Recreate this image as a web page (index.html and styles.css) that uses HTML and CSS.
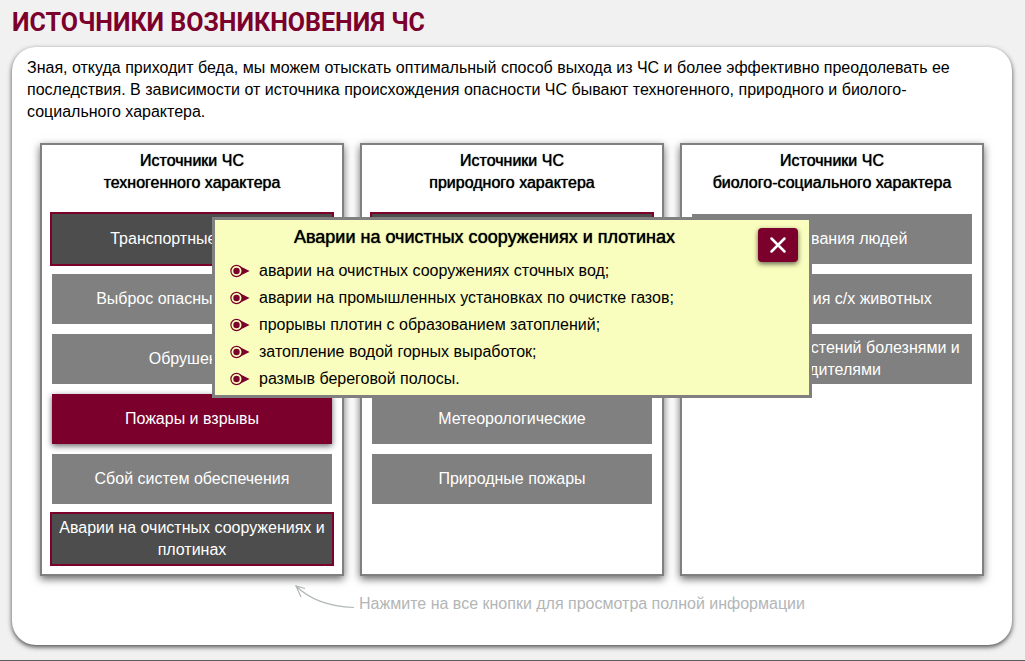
FILE: index.html
```html
<!DOCTYPE html>
<html lang="ru">
<head>
<meta charset="utf-8">
<title>Источники возникновения ЧС</title>
<link rel="stylesheet" href="styles.css">
</head>
<body>
<svg class="sprite" aria-hidden="true">
  <symbol id="marker" viewBox="0 0 20 14">
    <path d="M9 1.800 19.600 7 9 12.200Z" fill="#7b002c"/>
    <circle cx="6.500" cy="7" r="5.600" fill="#f9fdbd" stroke="#7b002c" stroke-width="1.200"/>
    <circle cx="6.500" cy="7" r="3.200" fill="#7b002c"/>
  </symbol>
</svg>
<h1 class="title">ИСТОЧНИКИ ВОЗНИКНОВЕНИЯ ЧС</h1>
<main class="panel">
  <p class="intro">Зная, откуда приходит беда, мы можем отыскать оптимальный способ выхода из ЧС и более эффективно преодолевать ее последствия. В зависимости от источника происхождения опасности ЧС бывают техногенного, природного и биолого-социального характера.</p>
  <div class="columns">
    <section class="column">
      <h2 class="column-title">Источники ЧС<br>техногенного характера</h2>
      <button class="item visited" type="button">Транспортные аварии</button>
      <button class="item" type="button">Выброс опасных веществ</button>
      <button class="item" type="button">Обрушения</button>
      <button class="item active" type="button">Пожары и взрывы</button>
      <button class="item" type="button">Сбой систем обеспечения</button>
      <button class="item visited" type="button">Аварии на очистных сооружениях и плотинах</button>
    </section>
    <section class="column">
      <h2 class="column-title">Источники ЧС<br>природного характера</h2>
      <button class="item visited" type="button">Геологические</button>
      <button class="item" type="button">Гидрологические</button>
      <button class="item" type="button">Геофизические</button>
      <button class="item" type="button">Метеорологические</button>
      <button class="item" type="button">Природные пожары</button>
    </section>
    <section class="column">
      <h2 class="column-title">Источники ЧС<br>биолого-социального характера</h2>
      <button class="item" type="button">Заболевания людей</button>
      <button class="item" type="button">Заболевания с/х животных</button>
      <button class="item" type="button">Поражения растений болезнями и вредителями</button>
    </section>
  </div>
  <div class="hint">
    <svg class="hint-arrow" width="60" height="24" viewBox="0 0 60 24" fill="none" stroke="#b2b6b7" stroke-width="1.200" aria-hidden="true">
      <path d="M1 1C14 14 34 21.500 59 22.500M10 3.500 1 1 6 12"/>
    </svg>
    <span>Нажмите на все кнопки для просмотра полной информации</span>
  </div>
  <div class="popup" role="dialog" aria-labelledby="popup-title">
    <h2 class="popup-title" id="popup-title">Аварии на очистных сооружениях и плотинах</h2>
    <button class="close" type="button" aria-label="Закрыть">
      <svg width="18" height="18" viewBox="0 0 18 18" fill="none" stroke="#fff" stroke-width="2.500" stroke-linecap="round" aria-hidden="true"><path d="M2.500 2.500 15.500 15.500M15.500 2.500 2.500 15.500"/></svg>
    </button>
    <ul class="list">
      <li><svg class="marker" aria-hidden="true"><use href="#marker"/></svg>аварии на очистных сооружениях сточных вод;</li>
      <li><svg class="marker" aria-hidden="true"><use href="#marker"/></svg>аварии на промышленных установках по очистке газов;</li>
      <li><svg class="marker" aria-hidden="true"><use href="#marker"/></svg>прорывы плотин с образованием затоплений;</li>
      <li><svg class="marker" aria-hidden="true"><use href="#marker"/></svg>затопление водой горных выработок;</li>
      <li><svg class="marker" aria-hidden="true"><use href="#marker"/></svg>размыв береговой полосы.</li>
    </ul>
  </div>
</main>
</body>
</html>
```
FILE: styles.css
```css
* { box-sizing: border-box; }

body {
  display: flex;
  flex-direction: column;
  min-height: 100vh;
  margin: 0;
  padding: 8px 13px 15px 12px;
  border-bottom: 1px solid #5c5c5c;
  background: #f1f1f1;
  color: #000;
  font: 16px/22px "Liberation Sans", Arial, sans-serif;
}

.sprite { display: none; }

.title {
  margin: 0 0 9px;
  color: #7b002c;
  font: bold 25px/30px Roboto, sans-serif;
}

.panel {
  position: relative;
  flex: 1;
  padding: 10px 15px 30px;
  border-radius: 24px;
  background: #fff;
  box-shadow: 0 2px 5px rgba(0, 0, 0, .7);
}

.intro { margin: 0 0 20px; }

.columns {
  display: grid;
  grid-template-columns: repeat(3, 1fr);
  gap: 16px;
  padding: 0 13px;
}

.column {
  display: flex;
  flex-direction: column;
  gap: 10px;
  padding: 5px 10px 10px;
  border: 2px solid #808080;
  background: #fff;
  box-shadow: 0 3px 8px rgba(0, 0, 0, .6);
}

.column-title,
.popup-title {
  margin: 0;
  font-weight: normal;
  text-align: center;
  text-shadow: 0 0 1px #000;
}

.column-title {
  margin-bottom: 10px;
  font-size: 16px;
}

.item {
  min-height: 50px;
  padding: 3px 4px;
  border: 0;
  background: #808080;
  color: #fff;
  font: inherit;
  cursor: pointer;
}

.visited {
  outline: 2px solid #7b002c;
  background: #4d4d4d;
}

.active {
  background: #7b002c;
  box-shadow: 0 2px 6px rgba(0, 0, 0, .6);
}

.hint {
  display: flex;
  gap: 4px;
  justify-content: center;
  margin-top: 17px;
  padding-left: 76px;
  color: #b2b6b7;
}

.hint-arrow { margin-top: -8px; }

.popup {
  position: absolute;
  top: 170px;
  right: 0;
  left: 0;
  width: 600px;
  max-width: 100%;
  margin: 0 auto;
  padding: 5px 15px 3px;
  border: 3px solid #808080;
  background: #f9fdbd;
}

.popup-title {
  margin-bottom: 8px;
  padding-right: 55px;
  font-size: 18px;
  line-height: 24px;
}

.close {
  position: absolute;
  top: 8px;
  right: 11px;
  display: flex;
  align-items: center;
  justify-content: center;
  width: 40px;
  height: 34px;
  padding: 0;
  border: 0;
  border-radius: 4px;
  background: #7b002c;
  box-shadow: 0 2px 5px rgba(0, 0, 0, .6);
  cursor: pointer;
}

.list {
  margin: 0;
  padding: 0;
  list-style: none;
  line-height: 27px;
}

.list li {
  display: flex;
  gap: 9px;
  align-items: center;
}

.marker {
  width: 20px;
  height: 14px;
}
```
